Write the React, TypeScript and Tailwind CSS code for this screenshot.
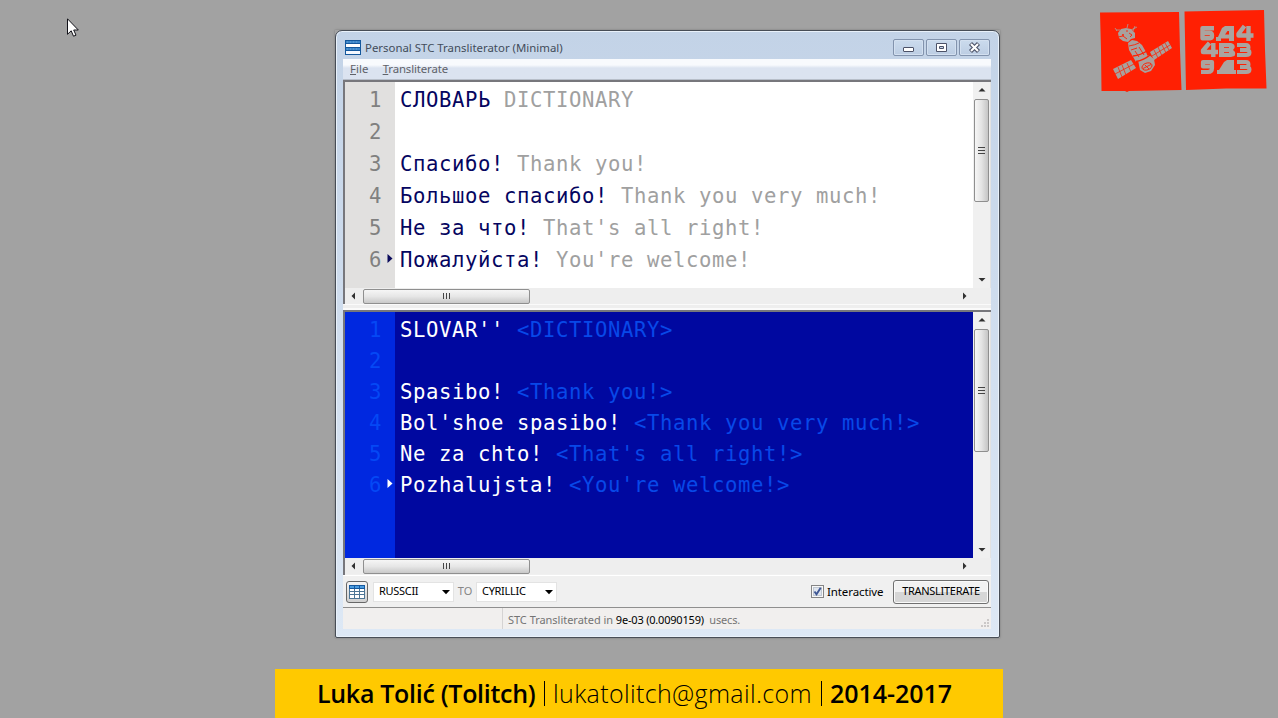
import React from "react";

type Line = { main: string; note: string };

const source: Line[] = [
  { main: "СЛОВАРЬ", note: "DICTIONARY" },
  { main: "", note: "" },
  { main: "Спасибо!", note: "Thank you!" },
  { main: "Большое спасибо!", note: "Thank you very much!" },
  { main: "Не за что!", note: "That's all right!" },
  { main: "Пожалуйста!", note: "You're welcome!" },
];

const output: Line[] = [
  { main: "SLOVAR''", note: "<DICTIONARY>" },
  { main: "", note: "" },
  { main: "Spasibo!", note: "<Thank you!>" },
  { main: "Bol'shoe spasibo!", note: "<Thank you very much!>" },
  { main: "Ne za chto!", note: "<That's all right!>" },
  { main: "Pozhalujsta!", note: "<You're welcome!>" },
];

type Dir = "up" | "down" | "left" | "right";

const arrowPoints: Record<Dir, string> = {
  up: "0.5,5.5 4,2 7.5,5.5",
  down: "0.5,2 7.5,2 4,5.5",
  left: "6,0.5 2.5,4 6,7.5",
  right: "2,0.5 5.5,4 2,7.5",
};

function Arrow({ dir }: { dir: Dir }) {
  return (
    <svg className="block h-2 w-2 shrink-0" viewBox="0 0 8 8">
      <polygon points={arrowPoints[dir]} fill="#303030" />
    </svg>
  );
}

function VScroll({ thumb }: { thumb: string }) {
  return (
    <div className="flex w-[18px] shrink-0 flex-col items-center border-r border-[#e2e2e2] bg-[#f0f0f0] pb-[4px] pt-[4px]">
      <Arrow dir="up" />
      <div
        className={`mt-[5px] flex w-[15px] flex-col items-center justify-center gap-px rounded-[2px] border border-[#8f8f8f] bg-linear-to-r from-[#f6f6f6] via-[#e4e4e4] to-[#c5c5c5] ${thumb}`}
      >
        <i className="h-px w-[7px] bg-[#444]" />
        <i className="mt-px h-px w-[7px] bg-[#444]" />
        <i className="mt-px h-px w-[7px] bg-[#444]" />
      </div>
      <div className="grow" />
      <Arrow dir="down" />
    </div>
  );
}

function HScroll() {
  return (
    <div className="flex h-4 shrink-0 items-center bg-[#eeeeee] pl-1">
      <Arrow dir="left" />
      <div className="ml-[6px] flex h-[15px] w-[167px] items-center justify-center gap-[2px] rounded-[2px] border border-[#8f8f8f] bg-linear-to-b from-[#f6f6f6] via-[#e6e6e6] to-[#c8c8c8]">
        <i className="h-[6px] w-px bg-[#444]" />
        <i className="h-[6px] w-px bg-[#444]" />
        <i className="h-[6px] w-px bg-[#444]" />
      </div>
      <div className="grow" />
      <Arrow dir="right" />
      <div className="w-[22px]" />
    </div>
  );
}

const mono = "font-['DejaVu_Sans_Mono',monospace] text-[20.6px] tracking-[0.6px]";

function SourceEditor() {
  return (
    <div className="flex h-[224px] shrink-0 flex-col border-l-2 border-t-2 border-[#77777c]">
      <div className="flex h-[206px] bg-white">
        <div className={`w-[50px] bg-[#e1e0df] pt-[2px] ${mono}`}>
          {source.map((_, i) => (
            <div key={i} className="flex h-8 items-center">
              <span className="w-[37px] text-right text-[#808080]">{i + 1}</span>
              {i === 5 && (
                <svg className="-mt-[2px] ml-[5px] block h-[10px] w-[6px]" viewBox="0 0 6 10">
                  <path d="M0.5 0 5.5 4.5 0.5 9Z" fill="#0b0b5c" />
                </svg>
              )}
            </div>
          ))}
        </div>
        <div className={`grow whitespace-pre pl-[5px] pt-[2px] ${mono}`}>
          {source.map((l, i) => (
            <div key={i} className="h-8 leading-8">
              <span className="text-[#050560]">{l.main}</span>
              <span className="text-[#a0a0a0]"> {l.note}</span>
            </div>
          ))}
        </div>
        <VScroll thumb="h-[103px]" />
      </div>
      <HScroll />
    </div>
  );
}

function OutputEditor() {
  return (
    <div className="flex h-[265px] shrink-0 flex-col border-l-2 border-t-2 border-[#77777c]">
      <div className="flex h-[246px] bg-[#0008a0]">
        <div className={`w-[50px] bg-[#0028e0] pt-[3px] ${mono}`}>
          {output.map((_, i) => (
            <div key={i} className="flex h-[31px] items-center">
              <span className="w-[37px] text-right text-[#0548f5]">{i + 1}</span>
              {i === 5 && (
                <svg className="-mt-[3px] ml-[5px] block h-[10px] w-[6px]" viewBox="0 0 6 10">
                  <path d="M0.5 0 5.5 4.5 0.5 9Z" fill="#fff" />
                </svg>
              )}
            </div>
          ))}
        </div>
        <div className={`grow whitespace-pre pl-[5px] pt-[3px] ${mono}`}>
          {output.map((l, i) => (
            <div key={i} className="h-[31px] leading-[31px]">
              <span className="text-white">{l.main}</span>
              <span className="text-[#0848e8]"> {l.note}</span>
            </div>
          ))}
        </div>
        <VScroll thumb="h-[123px]" />
      </div>
      <HScroll />
    </div>
  );
}

function CaptionButton({ children }: { children: React.ReactNode }) {
  return (
    <div className="flex h-[17px] w-[31px] items-center justify-center rounded-[2px] border border-[#8293ad] bg-linear-to-b from-[#cbdbed] to-[#bccde3] shadow-[inset_0_0_0_1px_#d3e0f0]">
      <svg className="block h-[13px] w-[15px]" viewBox="0 0 15 13" fill="none">
        {children}
      </svg>
    </div>
  );
}

function TitleBar() {
  return (
    <div className="flex h-[28px] shrink-0 items-start pl-[2px] pt-[8px]">
      <svg className="mt-[1px] block h-[15px] w-4" viewBox="0 0 16 15">
        <rect width="16" height="15" fill="#14589c" />
        <rect x="1" y="1" width="14" height="2" fill="#3d86c8" />
        <rect x="1" y="4" width="14" height="3" fill="#fff" />
        <rect x="1" y="8" width="14" height="2" fill="#3d86c8" />
        <rect x="1" y="11" width="14" height="3" fill="#f4f8ff" />
        <path d="M2 2h12M2 9h12" stroke="#7db6e6" strokeWidth="0.6" strokeDasharray="1 2" />
      </svg>
      <span className="ml-1 grow leading-[17px] tracking-[0.01px] text-[#424c5a]">
        Personal STC Transliterator (Minimal)
      </span>
      <div className="mr-[1px] flex gap-[2px]">
        <CaptionButton>
          <rect x="2.5" y="6.5" width="10" height="4" rx="0.5" fill="#fff" stroke="#4c5268" />
        </CaptionButton>
        <CaptionButton>
          <path d="M2.5 2.5h10v8h-10z" fill="#fff" stroke="#4c5268" />
          <path d="M5.5 5.5h4v2h-4z" fill="#c7d6e9" stroke="#4c5268" />
        </CaptionButton>
        <CaptionButton>
          <path d="M3.5 2.5 11.5 10.5M11.5 2.5 3.5 10.5" stroke="#4c5268" strokeWidth="4.3" />
          <path d="M4 3 11 10M11 3 4 10" stroke="#fff" strokeWidth="2.1" />
        </CaptionButton>
      </div>
    </div>
  );
}

function Select({ value, width }: { value: string; width: string }) {
  return (
    <div className={`flex h-5 items-center justify-between border border-[#e3e3e3] bg-white pl-[5px] pr-[3px] text-black ${width}`}>
      <span className="text-[11px] tracking-[-0.3px]">{value}</span>
      <svg className="block h-2 w-2" viewBox="0 0 8 8">
        <path d="M0 2h8L4 6.3Z" fill="#000" />
      </svg>
    </div>
  );
}

function Toolbar() {
  return (
    <div className="flex h-[32px] shrink-0 items-center border-b border-[#8f8f8f] bg-[#f0f0f0] pl-[3px] pr-[3px]">
      <div className="flex h-[22px] w-[22px] items-center justify-center rounded-[3px] border border-[#686868] bg-linear-to-b from-[#f4f4f4] to-[#d0d0d0]">
        <svg className="block h-[14px] w-4" viewBox="0 0 16 14">
          <rect width="16" height="14" fill="#4d7595" />
          <rect width="16" height="4" fill="#16599f" />
          <path d="M1 1h4v2H1zM6 1h4v2H6zM11 1h4v2h-4z" fill="#4c9de0" />
          <path d="M1 4h4v2H1zM6 4h4v2H6zM11 4h4v2h-4zM1 7h4v2H1zM6 7h4v2H6zM11 7h4v2h-4zM1 10h4v3H1zM6 10h4v3H6zM11 10h4v3h-4z" fill="#fff" />
        </svg>
      </div>
      <div className="w-[5px]" />
      <Select value="RUSSCII" width="w-[81px]" />
      <span className="w-[22px] text-center text-[11px] text-[#868686]">TO</span>
      <Select value="CYRILLIC" width="w-[81px]" />
      <div className="grow" />
      <svg className="block h-[13px] w-[13px]" viewBox="0 0 13 13">
        <rect x="0.5" y="0.5" width="12" height="12" fill="#f8f8f8" stroke="#858585" />
        <rect x="2.5" y="2.5" width="8" height="8" fill="#dfe5ee" stroke="#c0c8d2" />
        <path d="M3.5 6.5 5.5 9.3 9.7 2.8" stroke="#3f5794" strokeWidth="1.9" fill="none" />
      </svg>
      <span className="ml-[3px] w-[66px] text-[11.5px] tracking-[-0.1px] text-black">Interactive</span>
      <div className="mr-[-1px] flex h-[24px] w-[96px] items-center justify-center rounded-[3px] border border-[#707070] bg-linear-to-b from-[#f2f2f2] from-50% to-[#d6d6d6] to-50% text-[11px] tracking-[-0.3px] text-black shadow-[inset_0_0_0_1px_#fafafa]">
        TRANSLITERATE
      </div>
    </div>
  );
}

function AppWindow() {
  return (
    <div className="flex h-[608px] w-[665px] flex-col rounded-t-[7px] rounded-b-[2px] border border-[#474d56] bg-linear-to-b from-[#c3d3e7] to-[#dde8f5] pl-[7px] pr-[8px] font-['Noto_Sans','Open_Sans',sans-serif] text-[11.4px] shadow-[inset_0_0_0_1px_#e9f1fa]">
      <TitleBar />
      <div className="flex h-[21px] shrink-0 items-center gap-[14px] border-b border-[#b7bec9] bg-linear-to-b from-[#f8fafd] from-30% to-[#dbe3f0] to-45% pl-[7px] text-[#5f6269]">
        <span className="tracking-[0.1px]"><u>F</u>ile</span>
        <span className="tracking-[-0.12px]"><u>T</u>ransliterate</span>
      </div>
      <div className="flex h-[549px] shrink-0 flex-col bg-[#f0f0f0]">
        <SourceEditor />
        <div className="h-[6px] shrink-0 border-b-2 border-t border-[#fafafa] bg-[#eeeeee]" />
        <OutputEditor />
        <div className="h-px shrink-0 bg-white" />
        <Toolbar />
        <div className="flex h-[21px] shrink-0 bg-[#f1efee] text-[11px] leading-[23px]">
          <div className="w-[160px] border-r border-[#d5d3d3]" />
          <div className="grow whitespace-pre pl-[5px] text-[#747474]">
            <span className="tracking-[-0.03px]">STC Transliterated in </span>
            <span className="tracking-[-0.2px] text-black">9e-03 (0.0090159)</span>
            <span className="tracking-[-0.15px]">  usecs.</span>
          </div>
          <svg className="mr-[1px] mt-[11px] block h-[9px] w-[9px]" viewBox="0 0 9 9">
            <path d="M6 0h2v2H6zM3 3h2v2H3zM6 3h2v2H6zM0 6h2v2H0zM3 6h2v2H3zM6 6h2v2H6z" fill="#cbc8c8" />
          </svg>
        </div>
      </div>
    </div>
  );
}

function Logo() {
  return (
    <svg className="block h-[86px] w-[170px]" viewBox="1098 8 170 86">
      <path d="M1100 12.5 1179 12 1180 50 1181.5 90 1129 91 1127 92 1125 91 1101.5 91 1101 50Z" fill="#ff2003" />
      <path d="M1184.5 11.5 1264 10 1265 50 1266.5 88.5 1226 88.5 1186 90Z" fill="#ff2003" />
      <g fill="#a8a19e">
        <path d="M1118 33 1121 29 1126 28 1131 29 1135 33 1135 38 1131 39 1128 42 1123 41 1119 38Z" />
        <path d="M1128 43 1132 40 1137 41 1142 45 1146 52 1148 57 1136 62 1132 55 1129 50Z" />
        <path d="M1138 60 1149 55 1154 59 1155 65 1151 71 1145 73 1140 70Z" />
        <path d="M1150 52 1168 41 1172 48 1154 60ZM1113 69 1131 60 1136 68 1118 79Z" />
      </g>
      <path d="M1117 31 1115 28M1120 30 1116 30M1127 28 1128 24M1131 30 1137 27M1133 31 1135 26" stroke="#a8a19e" strokeWidth="0.8" />
      <g stroke="#ff2003" fill="none" strokeWidth="0.9">
        <path d="M1154 50 1158 58M1158 47 1162 56M1162 45 1166 53M1165 43 1169 50M1152 56 1170 45M1118 67 1122 77M1122 65 1126 75M1127 63 1131 72M1115 74 1134 64" strokeWidth="0.75" />
        <path d="M1118 37 1123 36 1127 39M1129 33 1132 35 1130 37M1129 46Q1135 45 1139 43M1131 50 1137 48M1139 47 1144 55M1135 51 1139 57" />
        <path d="M1133 56Q1141 55 1147 51" strokeWidth="1.4" />
        <path d="M1136 61.5Q1144 60 1150 55" strokeWidth="1.6" />
        <ellipse cx="1147" cy="66.5" rx="5.2" ry="3.4" transform="rotate(-20 1147 66.5)" />
        <path d="M1143 68.5 1151 64.5M1145 65 1149 69" />
      </g>
      <circle cx="1123" cy="35" r="1" fill="#ff2003" />
      <circle cx="1127" cy="31" r="0.8" fill="#ff2003" />
      <g stroke="#aaa4a0" fill="none" strokeLinejoin="round">
        <path d="M1214 28.3H1202.5V33H1210Q1212 33 1212 35.5 1212 38.2 1210 38.2H1202.5V28" strokeWidth="4.4" />
        <path d="M1244.5 26 1238.5 33.8V35.5H1253.5M1248.5 26V41" strokeWidth="4.4" />
        <path d="M1209.5 43 1203 50.5V52H1218M1213.3 43V57" strokeWidth="4.4" />
        <path d="M1237 45H1246Q1248.5 45 1248.5 47.5 1248.5 50 1246 50H1240M1246 50Q1249.5 50 1249.5 52.5 1249.5 55 1246 55H1237" strokeWidth="4" />
        <path d="M1212 66.5H1203V62H1212V68Q1212 72 1208 72H1201" strokeWidth="4.2" />
        <path d="M1237 62H1246Q1248.5 62 1248.5 64.5 1248.5 67 1246 67H1240M1246 67Q1249.5 67 1249.5 69.5 1249.5 72 1246 72H1237" strokeWidth="4" />
      </g>
      <g fill="#aaa4a0">
        <path d="M1216 41V37H1218L1222 28 1225 26H1234V41H1229V38.5H1221V41Z" />
        <path d="M1219 43H1231Q1235.500 44 1234.500 48L1233 50Q1236.500 52 1234.500 56L1231 57H1219Z" />
        <path d="M1217 74V70H1219L1224 62 1227 60H1234V70H1236V74Z" />
      </g>
      <path d="M1225 34.500 1227.500 31H1229V34.500Z" fill="#ff2003" />
      <path d="M1224 47.500H1229M1224 52.500H1229" stroke="#ff2003" strokeWidth="0.8" />
    </svg>
  );
}

export default function App() {
  return (
    <div className="relative flex h-[718px] w-[1278px] flex-col overflow-hidden bg-[#a2a2a2]">
      <main className="ml-[335px] mt-[30px] w-fit shadow-[0_0_2px_#777]">
        <AppWindow />
      </main>
      <footer className="ml-[275px] mt-[31px] flex h-[49px] w-[728px] shrink-0 items-center whitespace-nowrap bg-[#ffc900] pl-[42px] font-['Open_Sans','Noto_Sans',sans-serif] text-[25px] text-black">
        <b className="w-[223px] font-semibold tracking-[-0.3px]">Luka Tolić (Tolitch)</b>
        <span className="h-[25px] w-px translate-x-[4px] bg-black" />
        <span className="w-[276px] pl-[12px] font-light tracking-[0.36px]">lukatolitch@gmail.com</span>
        <span className="h-[25px] w-px translate-x-[4px] bg-black" />
        <b className="pl-[12px] font-semibold tracking-[-0.05px]">2014-2017</b>
      </footer>
      <div className="absolute left-[1098px] top-2">
        <Logo />
      </div>
      <svg className="absolute left-[67px] top-[18px] h-5 w-3" viewBox="0 0 12 20">
        <path d="M0.5 0.8V16.3L4.2 12.8 6.5 18.2 9 17.2 6.7 12H11.3Z" fill="#fff" stroke="#111118" />
      </svg>
    </div>
  );
}
